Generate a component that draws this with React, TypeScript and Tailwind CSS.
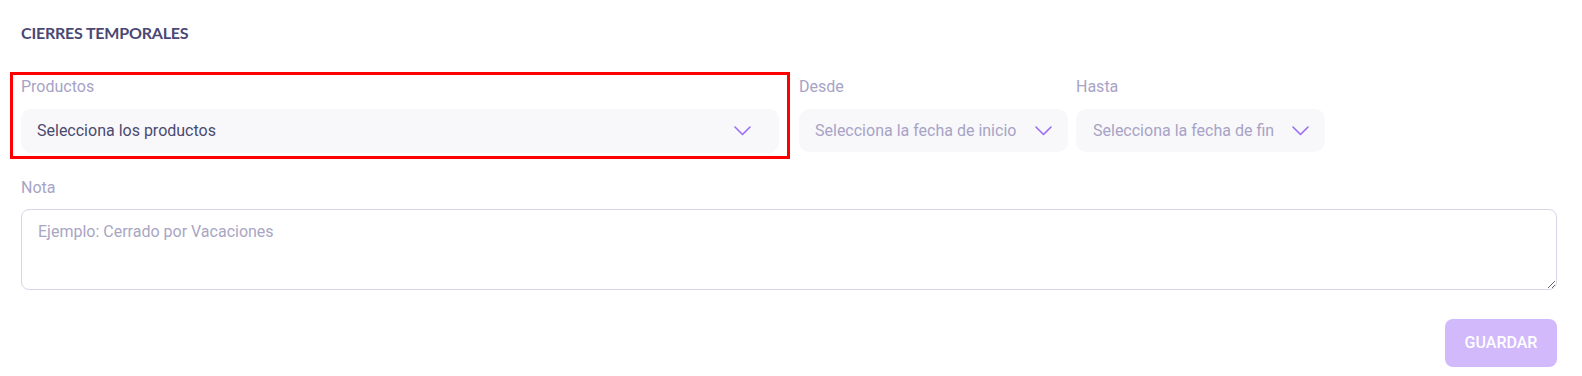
import React from "react";

function Chevron() {
  return (
    <svg width="17" height="10" viewBox="0 0 17 10" fill="none" className="shrink-0">
      <polyline points="1,1 8.5,8.5 16,1" stroke="#9b6cf7" strokeWidth="1.6" strokeLinecap="round" strokeLinejoin="round" />
    </svg>
  );
}

export default function App() {
  return (
    <div className="w-[1582px] h-[376px] bg-white pl-[21px] pr-[25px] pt-[23px]" style={{ fontFamily: "Roboto, 'Liberation Sans', sans-serif" }}>
      <div className="h-[20px] leading-[20px] text-[16px] font-bold text-[#4a4874] tracking-[-0.2px]" style={{ fontFamily: "Lato, 'Noto Sans', sans-serif" }}>
        CIERRES TEMPORALES
      </div>
      <div className="mt-[29px] -ml-[11px] flex items-start">
        <div className="w-[780px] border-[3px] border-[#ff0000] px-[8px] pt-[2px] pb-[3px]">
          <div className="h-[20px] leading-[20px] text-[16px] text-[#a7a3c6]">Productos</div>
          <div className="mt-[12px] h-[44px] rounded-[10px] bg-[#f8f8fb] flex items-center justify-between pl-[16px] pr-[28px]">
            <span className="text-[16px] text-[#4b4a70]">Selecciona los productos</span>
            <Chevron />
          </div>
        </div>
        <div className="ml-[9px] pt-[5px] w-[269px]">
          <div className="h-[20px] leading-[20px] text-[16px] text-[#a7a3c6]">Desde</div>
          <div className="mt-[12px] h-[43px] rounded-[10px] bg-[#f8f8fb] flex items-center justify-between pl-[16px] pr-[16px]">
            <span className="text-[16px] text-[#a7a3c6] whitespace-nowrap">Selecciona la fecha de inicio</span>
            <Chevron />
          </div>
        </div>
        <div className="ml-[8px] pt-[5px] w-[249px]">
          <div className="h-[20px] leading-[20px] text-[16px] text-[#a7a3c6]">Hasta</div>
          <div className="mt-[12px] h-[43px] rounded-[10px] bg-[#f8f8fb] flex items-center justify-between pl-[17px] pr-[16px]">
            <span className="text-[16px] text-[#a7a3c6] whitespace-nowrap">Selecciona la fecha de fin</span>
            <Chevron />
          </div>
        </div>
      </div>
      <div className="mt-[19px] h-[20px] leading-[20px] text-[16px] text-[#a7a3c6]">Nota</div>
      <textarea
        className="mt-[11px] block w-[1536px] h-[81px] rounded-[8px] border border-[#d8d5e8] px-[16px] py-[10px] text-[16px] text-[#4b4a70] placeholder:text-[#a9a6c3] outline-none"
        placeholder="Ejemplo: Cerrado por Vacaciones"
        style={{ fontFamily: "Roboto, 'Liberation Sans', sans-serif" }}
      />
      <div className="mt-[29px] flex justify-end w-[1536px]">
        <button className="w-[112px] h-[48px] rounded-[8px] bg-[#d1b9fc] text-white text-[16px] font-medium">
          GUARDAR
        </button>
      </div>
    </div>
  );
}
